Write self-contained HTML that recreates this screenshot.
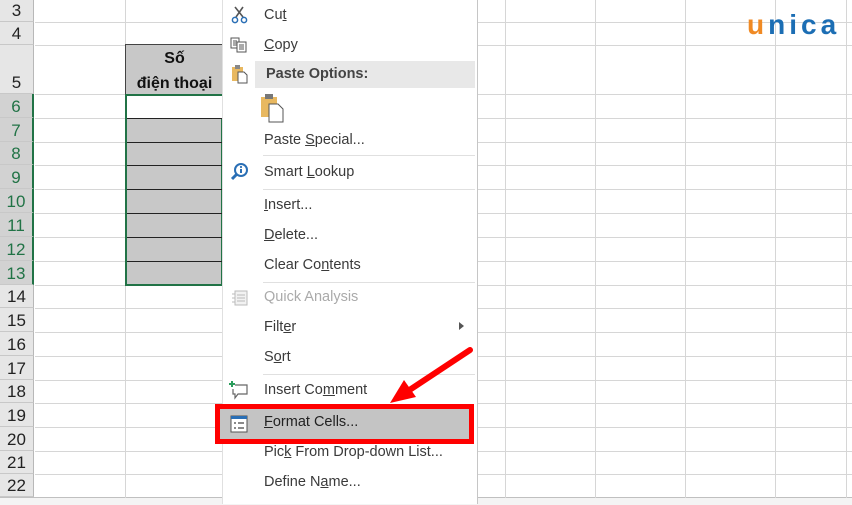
<!DOCTYPE html>
<html><head><meta charset="utf-8"><style>
body{margin:0;width:852px;height:504px;overflow:hidden;background:#fff;font-family:"Liberation Sans",sans-serif;position:relative}
.a{position:absolute}
.rh{position:absolute;left:0;width:34px;background:#e6e6e6;border-bottom:1px solid #c8c8c8;border-right:1px solid #b8b8b8;text-align:center;font-size:17px;color:#222;box-sizing:border-box;display:flex;align-items:flex-end;justify-content:center;line-height:21px}
.hl{background:#d2d2d2;color:#217346;border-right:2px solid #217346}
.hline{position:absolute;left:35px;right:0;height:1px;background:#d6d6d6}
.vline{position:absolute;top:0;height:498px;width:1px;background:#d6d6d6}
.menu{position:absolute;left:222px;top:0;width:254px;height:504px;background:#fff;border-right:1px solid #c6c6c6;border-left:1px solid #e0e0e0}
.it{position:absolute;left:41px;font-size:14.5px;color:#3a3a3a;font-family:"Liberation Sans",sans-serif}
.sep{position:absolute;left:40px;width:212px;height:1px;background:#e0e0e0}
u{text-decoration:underline}
</style></head><body>
<div class="hline" style="top:22px"></div><div class="hline" style="top:45px"></div><div class="hline" style="top:94px"></div>
<div class="hline" style="top:118px"></div><div class="hline" style="top:142px"></div><div class="hline" style="top:165px"></div><div class="hline" style="top:189px"></div><div class="hline" style="top:213px"></div><div class="hline" style="top:237px"></div><div class="hline" style="top:261px"></div><div class="hline" style="top:285px"></div><div class="hline" style="top:308px"></div><div class="hline" style="top:332px"></div><div class="hline" style="top:356px"></div><div class="hline" style="top:380px"></div><div class="hline" style="top:403px"></div><div class="hline" style="top:427px"></div><div class="hline" style="top:451px"></div><div class="hline" style="top:474px"></div>
<div class="a" style="left:0;right:0;top:497px;height:7px;background:#f4f4f4;border-top:1px solid #c0c0c0"></div>
<div class="vline" style="left:125px"></div><div class="vline" style="left:505px"></div><div class="vline" style="left:595px"></div><div class="vline" style="left:685px"></div><div class="vline" style="left:775px"></div><div class="vline" style="left:846px"></div>
<div class="rh" style="top:0;height:22px">3</div>
<div class="rh" style="top:22px;height:23px">4</div>
<div class="rh" style="top:45px;height:49px">5</div>
<div class="rh hl" style="top:94px;height:24px">6</div>
<div class="rh hl" style="top:118px;height:24px">7</div>
<div class="rh hl" style="top:142px;height:23px">8</div>
<div class="rh hl" style="top:165px;height:24px">9</div>
<div class="rh hl" style="top:189px;height:24px">10</div>
<div class="rh hl" style="top:213px;height:24px">11</div>
<div class="rh hl" style="top:237px;height:24px">12</div>
<div class="rh hl" style="top:261px;height:24px">13</div>
<div class="rh" style="top:285px;height:23px">14</div>
<div class="rh" style="top:308px;height:24px">15</div>
<div class="rh" style="top:332px;height:24px">16</div>
<div class="rh" style="top:356px;height:24px">17</div>
<div class="rh" style="top:380px;height:23px">18</div>
<div class="rh" style="top:403px;height:24px">19</div>
<div class="rh" style="top:427px;height:24px">20</div>
<div class="rh" style="top:451px;height:23px">21</div>
<div class="rh" style="top:474px;height:23px">22</div>
<div class="a" style="left:125px;top:44px;width:98px;height:50px;background:#c8c8c8;border-top:1px solid #444;border-left:1px solid #444;box-sizing:border-box;font-weight:bold;font-size:16px;text-align:center;line-height:25px;color:#111;padding-top:1px;white-space:nowrap;overflow:hidden">Số<br>điện thoại</div>
<div class="a" style="left:125px;top:94px;width:98px;height:192px;background:#c8c8c8;border:2px solid #217346;box-sizing:border-box"></div>
<div class="a" style="left:127px;top:96px;width:96px;height:22px;background:#fff"></div>
<div class="a" style="left:127px;top:118px;width:96px;height:1px;background:#222"></div>
<div class="a" style="left:127px;top:142px;width:96px;height:1px;background:#222"></div>
<div class="a" style="left:127px;top:165px;width:96px;height:1px;background:#222"></div>
<div class="a" style="left:127px;top:189px;width:96px;height:1px;background:#222"></div>
<div class="a" style="left:127px;top:213px;width:96px;height:1px;background:#222"></div>
<div class="a" style="left:127px;top:237px;width:96px;height:1px;background:#222"></div>
<div class="a" style="left:127px;top:261px;width:96px;height:1px;background:#222"></div>
<div class="a" style="left:747px;top:9px;font-size:28px;font-weight:bold;letter-spacing:4px;font-family:'Liberation Sans',sans-serif;line-height:32px"><span style="color:#f08a24">u</span><span style="color:#1c6eb4">nica</span></div>
<div class="menu">
<svg class="a" style="left:8px;top:6px" width="18" height="18" viewBox="0 0 18 18"><path d="M4 1 L12 11 M12 1 L5 11" stroke="#555" stroke-width="1.6" fill="none"/><circle cx="4" cy="14" r="2.6" stroke="#2a6fb5" stroke-width="1.5" fill="none"/><circle cx="13" cy="14" r="2.6" stroke="#2a6fb5" stroke-width="1.5" fill="none"/></svg>
<div class="it" style="top:7px">Cu<u>t</u></div>
<svg class="a" style="left:7px;top:37px" width="18" height="16" viewBox="0 0 18 16"><rect x="1" y="1" width="8" height="10" fill="#fff" stroke="#555"/><path d="M3 4h4M3 6h4M3 8h4" stroke="#555"/><rect x="7" y="5" width="9" height="10" fill="#fff" stroke="#555"/><path d="M9 8h5M9 10h5M9 12h5" stroke="#555"/></svg>
<div class="it" style="top:37px"><u>C</u>opy</div>
<svg class="a" style="left:8px;top:64px" width="18" height="20" viewBox="0 0 18 20"><rect x="1" y="3" width="11" height="14" fill="#e8b860"/><rect x="4" y="1" width="5" height="4" fill="#888"/><path d="M7 8h6l3 3v8H7z" fill="#fff" stroke="#555"/></svg>
<div class="a" style="left:32px;top:61px;width:220px;height:27px;background:#e8e8e8"></div>
<div class="it" style="top:66px;font-weight:bold;color:#444;left:43px">Paste Options:</div>
<svg class="a" style="left:37px;top:93px" width="26" height="30" viewBox="0 0 26 30"><rect x="1" y="4" width="16" height="20" fill="#e8b860"/><rect x="5" y="1" width="8" height="5" fill="#777"/><path d="M9 11h9l5 5v13H9z" fill="#fff" stroke="#555"/></svg>
<div class="it" style="top:132px">Paste <u>S</u>pecial...</div>
<div class="sep" style="top:155px"></div>
<svg class="a" style="left:7px;top:162px" width="20" height="20" viewBox="0 0 20 20"><circle cx="11" cy="8" r="6" fill="none" stroke="#2a6fb5" stroke-width="2"/><path d="M6.5 12.5 L2 17" stroke="#2a6fb5" stroke-width="3"/><path d="M11 7v4" stroke="#2a6fb5" stroke-width="2"/><circle cx="11" cy="5" r="1.1" fill="#2a6fb5"/></svg>
<div class="it" style="top:164px">Smart <u>L</u>ookup</div>
<div class="sep" style="top:189px"></div>
<div class="it" style="top:197px"><u>I</u>nsert...</div>
<div class="it" style="top:227px"><u>D</u>elete...</div>
<div class="it" style="top:257px">Clear Co<u>n</u>tents</div>
<div class="sep" style="top:282px"></div>
<svg class="a" style="left:8px;top:289px" width="18" height="18" viewBox="0 0 18 18"><rect x="4" y="2" width="12" height="14" fill="#f2f2f2" stroke="#bbb"/><path d="M6 6h8M6 9h8M6 12h8M1 5h3M1 9h3M1 13h3" stroke="#bbb"/></svg>
<div class="it" style="top:289px;color:#aaa">Quick Analysis</div>
<div class="it" style="top:319px">Filt<u>e</u>r</div>
<div class="a" style="left:236px;top:322px;width:0;height:0;border-left:5px solid #555;border-top:4px solid transparent;border-bottom:4px solid transparent"></div>
<div class="it" style="top:349px">S<u>o</u>rt</div>
<div class="sep" style="top:374px"></div>
<svg class="a" style="left:6px;top:380px" width="20" height="20" viewBox="0 0 20 20"><path d="M6 5h12v9H9l-3 4v-4H4V9" fill="none" stroke="#666" stroke-width="1.2"/><path d="M3 1v6M0 4h6" stroke="#2a9d5c" stroke-width="2"/></svg>
<div class="it" style="top:382px">Insert Co<u>m</u>ment</div>
<div class="a" style="left:-8px;top:404px;width:259px;height:40px;box-sizing:border-box;border:5px solid #f00;background:#c4c4c4"></div>
<svg class="a" style="left:7px;top:415px" width="18" height="18" viewBox="0 0 18 18"><rect x="1" y="1" width="16" height="16" fill="#fff" stroke="#555"/><rect x="1" y="1" width="16" height="3" fill="#2a6fb5"/><path d="M4 8h2M8 8h6M4 13h2M8 13h6" stroke="#444" stroke-width="1.2"/></svg>
<div class="it" style="top:414px;color:#222"><u>F</u>ormat Cells...</div>
<div class="it" style="top:444px">Pic<u>k</u> From Drop-down List...</div>
<div class="it" style="top:474px">Define N<u>a</u>me...</div>
</div>
<svg class="a" style="left:380px;top:340px" width="100" height="70" viewBox="0 0 100 70"><path d="M90 10 L28 51" stroke="#f00" stroke-width="6" stroke-linecap="round"/><path d="M10 63 L24 40 L36 57 Z" fill="#f00"/></svg>
</body></html>
